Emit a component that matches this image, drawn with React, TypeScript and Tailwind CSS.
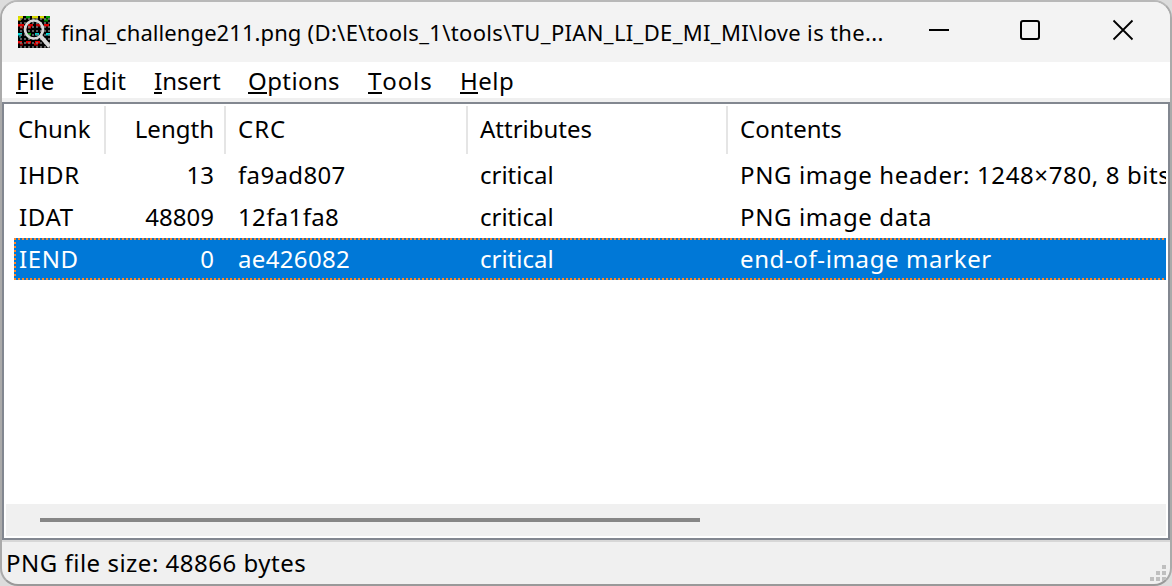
import type { ReactNode } from "react";

function AppIcon() {
  const tiles: [number, number, number, string][] = [
    [0, 0, 5, "#d8d800"], [8, 0, 4, "#00a000"], [14, 0, 6, "#d8d800"], [22, 0, 4, "#d8d800"], [28, 0, 4, "#00a000"],
    [0, 2, 3, "#e8e800"], [26, 3, 4, "#008800"],
    [0, 8, 6, "#e00000"], [10, 8, 5, "#d00000"], [18, 8, 5, "#c00000"], [26, 8, 5, "#e00000"],
    [2, 10, 3, "#a00000"], [10, 10, 3, "#e00000"],
    [0, 17, 4, "#00d8d8"], [8, 17, 5, "#00a000"], [17, 17, 4, "#00c8c8"], [28, 17, 4, "#00d8d8"],
    [1, 19, 2, "#008080"], [9, 19, 3, "#008000"],
    [0, 25, 4, "#e00000"], [8, 25, 5, "#e00000"], [17, 25, 5, "#e00000"],
    [2, 27, 3, "#900000"], [16, 27, 4, "#c00000"],
  ];
  const dots: ReactNode[] = [];
  for (let y = 0; y < 8; y++)
    for (let x = 0; x < 8; x++)
      dots.push(<rect key={`${x}-${y}`} x={x * 4 + 2} y={y * 4 + 2} width="2" height="2" fill="#7c7c7c" opacity="0.75" />);
  return (
    <svg width="32" height="32" viewBox="0 0 32 32" className="shrink-0">
      <rect width="32" height="32" fill="#000" />
      {tiles.map(([x, y, w, c], i) => (
        <rect key={i} x={x} y={y} width={w} height="2.5" fill={c} />
      ))}
      {dots}
      <circle cx="16" cy="13.500" r="9" fill="none" stroke="#d8d8d8" strokeWidth="2.700" />
      <path d="M22.500 20L31.500 30.500" stroke="#d8d8d8" strokeWidth="4" />
    </svg>
  );
}

const menu: [string, string, string][] = [
  ["F", "ile", "w-[66px]"],
  ["E", "dit", "w-[72px] tracking-[0.3px]"],
  ["I", "nsert", "w-[94px]"],
  ["O", "ptions", "w-[120px] tracking-[0.4px]"],
  ["T", "ools", "w-[92px] tracking-[0.9px]"],
  ["H", "elp", "w-[70px] tracking-[0.5px]"],
];

const rows = [
  ["IHDR", "13", "fa9ad807", "critical", "PNG image header: 1248×780, 8 bits"],
  ["IDAT", "48809", "12fa1fa8", "critical", "PNG image data"],
  ["IEND", "0", "ae426082", "critical", "end-of-image marker"],
];

function Row({ cells, selected }: { cells: string[]; selected: boolean }) {
  return (
    <div className={`relative ml-[10px] mr-[2px] flex h-[42px] items-center overflow-hidden whitespace-nowrap ${selected ? "bg-[#0078d7] text-white" : ""}`}>
      <span className="w-[90px] shrink-0 pl-[5px] tracking-[0.6px]">{cells[0]}</span>
      <span className="w-[110px] shrink-0 text-right">{cells[1]}</span>
      <span className="w-[252px] shrink-0 pl-6 tracking-[0.35px]">{cells[2]}</span>
      <span className="w-[260px] shrink-0 pl-[14px]">{cells[3]}</span>
      <span className="shrink-0 pl-[14px] tracking-[0.62px]">{cells[4]}</span>
      {selected && (
        <>
          <i className="absolute inset-x-0 top-0 h-[2px] bg-[repeating-linear-gradient(90deg,#ff8728_0_2px,#0078d7_2px_4px)]" />
          <i className="absolute inset-x-0 bottom-0 h-[2px] bg-[repeating-linear-gradient(90deg,#ff8728_0_2px,#0078d7_2px_4px)]" />
          <i className="absolute inset-y-0 left-0 w-[2px] bg-[repeating-linear-gradient(180deg,#ff8728_0_2px,#0078d7_2px_4px)]" />
        </>
      )}
    </div>
  );
}

export default function App() {
  return (
    <div className="flex h-[586px] w-[1172px] overflow-hidden bg-[#dcdcdc] font-['Noto_Sans',sans-serif] text-[24px] leading-none text-black">
      <div className="flex h-[586px] w-[1172px] flex-col overflow-hidden rounded-[18px] border-2 border-t-[#b8b8b8] border-r-[#aaaaaa] border-b-[#999999] border-l-[#aaaaaa] bg-[#f0f0f0]">
        <header className="flex h-[60px] shrink-0 items-center bg-[#f3f3f3] pl-4">
          <AppIcon />
          <h1 className="ml-[11px] w-[868px] whitespace-nowrap pb-[1px] text-[22px] font-normal tracking-[0.34px]">
            <span className="tracking-[0.08px]">final_challenge211.png</span>
            {" (D:\\E\\tools_1\\tools\\TU_PIAN_LI_DE_MI_MI\\love is the..."}
          </h1>
          <svg width="206" height="22" viewBox="0 0 206 22" fill="none" stroke="#000" className="mb-1 shrink-0">
            <path d="M0 11H20" strokeWidth="2" />
            <rect x="92" y="2" width="18" height="18" rx="2" strokeWidth="2" />
            <path d="M184.500 1.500L203.500 20.500M203.500 1.500L184.500 20.500" strokeWidth="1.800" />
          </svg>
        </header>
        <nav className="flex h-[36px] shrink-0 items-center bg-white pl-[14px] pt-[2px]">
          {menu.map(([a, b, w]) => (
            <span key={a} className={`shrink-0 whitespace-nowrap ${w}`}>
              <span className="inline-block h-[25px] border-b-2 border-black">{a}</span>
              {b}
            </span>
          ))}
        </nav>
        <main className="mt-1 flex h-[438px] shrink-0 flex-col border-2 border-[#828790] bg-white">
          <div className="flex h-[50px] shrink-0 items-center pt-[2px]">
            <span className="flex h-12 w-[102px] items-center border-r-2 border-[#e5e5e5] pb-[2px] pl-[14px]">Chunk</span>
            <span className="flex h-12 w-[120px] items-center justify-end border-r-2 border-[#e5e5e5] pb-[2px] pr-[10px]">Length</span>
            <span className="flex h-12 w-[242px] items-center border-r-2 border-[#e5e5e5] pb-[2px] pl-3 tracking-[1px]">CRC</span>
            <span className="flex h-12 w-[260px] items-center border-r-2 border-[#e5e5e5] pb-[2px] pl-3">Attributes</span>
            <span className="flex h-12 items-center pb-[2px] pl-3">Contents</span>
          </div>
          {rows.map((r, i) => (
            <Row key={r[0]} cells={r} selected={i === 2} />
          ))}
          <div className="mx-[2px] mb-[2px] mt-auto flex h-8 items-center bg-[#f0f0f0] pl-[34px]">
            <div className="h-1 w-[660px] bg-[#868686]" />
          </div>
        </main>
        <footer className="flex min-h-0 flex-1 items-center justify-between border-t-2 border-[#d7d7d7] pl-1">
          <span className="tracking-[0.5px]">PNG file size: 48866 bytes</span>
          <svg width="20" height="20" viewBox="0 0 20 20" fill="#bfbfbf" className="mr-[2px] mt-5">
            <path d="M14 2h4v4h-4zM8 8h4v4H8zM14 8h4v4h-4zM2 14h4v4H2zM8 14h4v4H8zM14 14h4v4h-4z" />
          </svg>
        </footer>
      </div>
    </div>
  );
}
